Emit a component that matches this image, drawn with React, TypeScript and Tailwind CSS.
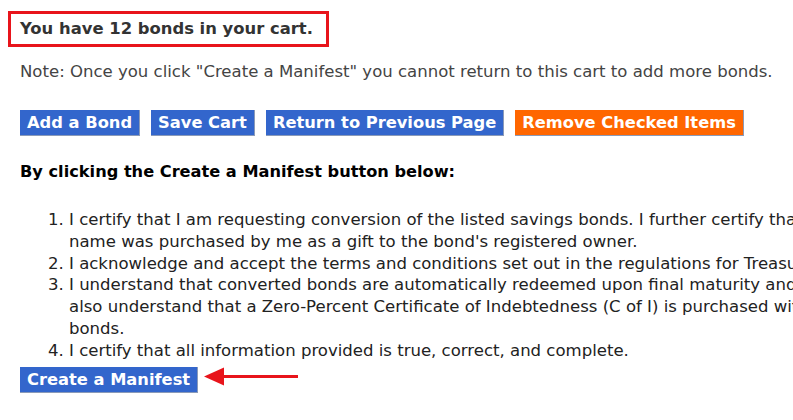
import React from 'react';

const buttons = [
    { label: 'Add a Bond', color: 'bg-[#3366cc]' },
    { label: 'Save Cart', color: 'bg-[#3366cc]' },
    { label: 'Return to Previous Page', color: 'bg-[#3366cc]' },
    { label: 'Remove Checked Items', color: 'bg-[#ff6600] text-[#fff8e0]' },
];

const ActionButton: React.FC<{ label: string; color: string }> = ({ label, color }) => (
    <button type="button" className={`${color} text-white font-bold text-[16.3px] leading-[25px] px-[7px] border-b border-r border-[#8a9ab8]`}>
        {label}
    </button>
);

const Arrow = () => (
    <svg width="96" height="22" viewBox="0 0 96 22" className="ml-[6px] -mt-[6px]">
        <path d="M94 10.5 L20 10.5" stroke="#e8141b" strokeWidth="3" />
        <path d="M0 10.5 L20 1.5 L20 19.5 Z" fill="#e8141b" />
    </svg>
);

export default function App() {
    return (
        <div className="w-[793px] h-[420px] overflow-hidden bg-white" style={{ fontFamily: '"DejaVu Sans", Verdana, sans-serif' }}>
            <div className="w-[1100px] pt-[11px] pl-[8px]">
                <div className="inline-block border-[3px] border-[#e8141b] pl-[9px] pr-[13px] py-[5px]">
                    <p className="text-[16.4px] font-bold text-[#333] leading-[20px]">You have 12 bonds in your cart.</p>
                </div>

                <div className="pl-[12px]">
                    <p className="mt-[15px] text-[16.55px] text-[#444] leading-[20px]">
                        Note: Once you click "Create a Manifest" you cannot return to this cart to add more bonds.
                    </p>

                    <div className="mt-[28px] flex gap-[11px]">
                        {buttons.map(b => <ActionButton key={b.label} label={b.label} color={b.color} />)}
                    </div>

                    <h2 className="mt-[26px] text-[16.2px] font-bold text-black leading-[20px]">
                        By clicking the Create a Manifest button below:
                    </h2>

                    <ol className="mt-[27px] list-decimal pl-[49px] text-[16.55px] leading-[21.8px] text-[#222]">
                        <li>
                            I certify that I am requesting conversion of the listed savings bonds. I further certify that any bond issued in my<br />
                            name was purchased by me as a gift to the bond's registered owner.
                        </li>
                        <li>I acknowledge and accept the terms and conditions set out in the regulations for Treasury securities.</li>
                        <li>
                            I understand that converted bonds are automatically redeemed upon final maturity and the proceeds credited. I<br />
                            also understand that a Zero-Percent Certificate of Indebtedness (C of I) is purchased with the proceeds of the<br />
                            bonds.
                        </li>
                        <li>I certify that all information provided is true, correct, and complete.</li>
                    </ol>

                    <div className="mt-[5px] flex items-center">
                        <ActionButton label="Create a Manifest" color="bg-[#3366cc]" />
                        <Arrow />
                    </div>
                </div>
            </div>
        </div>
    );
}
